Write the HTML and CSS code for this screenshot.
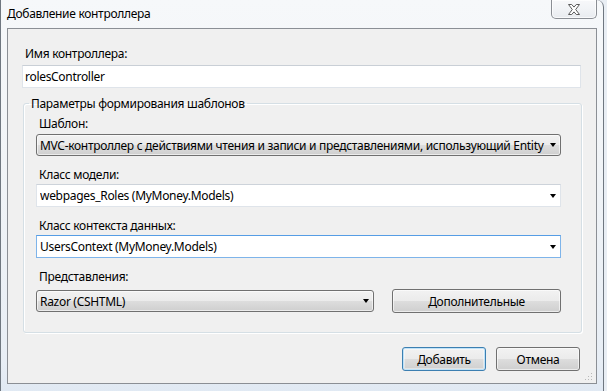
FILE: index.html
```html
<!DOCTYPE html>
<html lang="ru">
<head>
  <meta charset="UTF-8">
  <title>Добавление контроллера</title>
  <link rel="stylesheet" href="styles.css">
</head>
<body>

  <div class="window">
    <div class="titlebar">
      <span class="title">Добавление контроллера</span>
      <button class="close" title="Закрыть">
        <svg width="12" height="11" viewBox="0 0 12 11">
          <path d="M0.5 0.5h3.2l2.3 2.6 2.3-2.6h3.2l-3.8 5 3.8 5h-3.2l-2.3-2.6-2.3 2.6h-3.2l3.8-5z" fill="#fff" stroke="#5b5b5b" stroke-width="1" stroke-linejoin="round"/>
        </svg>
      </button>
    </div>

    <div class="client">
      <label class="label top-label">Имя контроллера:</label>
      <div class="textbox">rolesController</div>

      <fieldset class="group">
        <legend>Параметры формирования шаблонов</legend>

        <label class="label">Шаблон:</label>
        <div class="combo combo-list">
          <span class="combo-text">MVC-контроллер с действиями чтения и записи и представлениями, использующий Entity</span>
          <span class="arrow"></span>
        </div>

        <label class="label">Класс модели:</label>
        <div class="combo">
          <span class="combo-text">webpages_Roles (MyMoney.Models)</span>
          <span class="arrow"></span>
        </div>

        <label class="label">Класс контекста данных:</label>
        <div class="combo focused">
          <span class="combo-text">UsersContext (MyMoney.Models)</span>
          <span class="arrow"></span>
        </div>

        <label class="label">Представления:</label>
        <div class="views-row">
          <div class="combo combo-list">
            <span class="combo-text">Razor (CSHTML)</span>
            <span class="arrow"></span>
          </div>
          <button class="btn">Дополнительные</button>
        </div>
      </fieldset>

      <div class="actions">
        <button class="btn btn-default">Добавить</button>
        <button class="btn">Отмена</button>
      </div>

      <!-- size grip -->
      <svg class="grip" width="8" height="8" viewBox="0 0 8 8">
        <rect x="6" y="0" width="1" height="1" fill="#b8b8b8"/>
        <rect x="3" y="3" width="1" height="1" fill="#b8b8b8"/>
        <rect x="6" y="3" width="1" height="1" fill="#b8b8b8"/>
        <rect x="0" y="6" width="1" height="1" fill="#b8b8b8"/>
        <rect x="3" y="6" width="1" height="1" fill="#b8b8b8"/>
        <rect x="6" y="6" width="1" height="1" fill="#b8b8b8"/>
      </svg>
    </div>
  </div>

</body>
</html>
```

FILE: styles.css
```css
* {
  box-sizing: border-box;
}

body {
  margin: 0;
  width: 607px;
  height: 391px;
  overflow: hidden;
  background: #e9eef4;
  font-family: "Noto Sans", "Open Sans", sans-serif;
  font-size: 12px;
  letter-spacing: -0.3px;
  color: #000;
}

/* Window frame (Aero glass look) */
.window {
  width: 604px;
  height: 400px;
  padding: 0 6px;
  border: 1px solid #6f7780;
  border-top: none;
  border-radius: 0 7px 0 0;
  background: linear-gradient(180deg, #f6f8fa 0%, #f1f4f7 40%, #e8eef5 90%, #dfe8f3 100%);
  display: flex;
  flex-direction: column;
}

.titlebar {
  height: 28px;
  display: flex;
  justify-content: space-between;
  align-items: flex-start;
}

.title {
  padding-top: 6px;
  line-height: 16px;
}

.close {
  width: 46px;
  height: 19px;
  margin: 0;
  padding: 0;
  border: 1px solid #8a8e94;
  border-top: none;
  border-radius: 0 0 5px 5px;
  background: linear-gradient(180deg, #f7f8fa 0%, #f1f3f6 50%, #e8ebef 100%);
  box-shadow: inset 0 0 0 1px rgba(255, 255, 255, 0.7);
  display: flex;
  align-items: center;
  justify-content: center;
}

/* Client area */
.client {
  position: relative;
  height: 356px;
  padding: 17px 15px 12px 14px;
  border: 1px solid #8b8f95;
  background: #f0f0f0;
  display: flex;
  flex-direction: column;
}

.label {
  display: block;
  line-height: 15px;
  padding-left: 3px;
}

.top-label {
  margin-bottom: 4px;
}

.textbox {
  height: 23px;
  line-height: 21px;
  padding-left: 2px;
  background: #fff;
  border: 1px solid #dfe4ea;
  border-top-color: #c9cfd6;
}

/* Group box */
.group {
  margin: 8px -1px 0 1px;
  padding: 5px 20px 19px 12px;
  border: 1px solid #d5dfe5;
  border-radius: 3px;
  box-shadow: inset 1px 1px 0 #fff, 1px 1px 0 #fff;
  min-width: 0;
}

.group legend {
  margin-left: -7px;
  padding: 0 2px;
  line-height: 15px;
}

.group .label {
  margin-top: 11px;
  margin-bottom: 2px;
}

.group .label:first-of-type {
  margin-top: 0;
  margin-bottom: 3px;
}

/* Combo boxes */
.combo {
  height: 23px;
  display: flex;
  align-items: center;
  padding: 0 4px 0 3px;
  background: #fff;
  border: 1px solid #dfe4ea;
  border-top-color: #cdd3da;
}

.combo.focused {
  border-color: #7eb4ea;
  border-top-color: #569de5;
}

.combo-list {
  height: 22px;
  border: 1px solid #707070;
  border-radius: 3px;
  background: linear-gradient(180deg, #f2f2f2 0%, #ebebeb 50%, #dddddd 51%, #cfcfcf 100%);
  box-shadow: inset 0 0 0 1px rgba(255, 255, 255, 0.6);
}

.combo-text {
  flex: 1;
  white-space: nowrap;
  overflow: hidden;
}

.arrow {
  width: 0;
  height: 0;
  border-left: 3.5px solid transparent;
  border-right: 3.5px solid transparent;
  border-top: 4px solid #000;
  margin-left: 4px;
}

.group .label:nth-of-type(4) {
  margin-bottom: 5px;
}

.views-row {
  display: grid;
  grid-template-columns: 338px 1fr;
  gap: 18px;
  align-items: center;
}

/* Buttons */
.btn {
  height: 24px;
  padding: 0;
  font: inherit;
  letter-spacing: inherit;
  color: #000;
  border: 1px solid #707070;
  border-radius: 3px;
  background: linear-gradient(180deg, #f2f2f2 0%, #ebebeb 50%, #dddddd 51%, #cfcfcf 100%);
  box-shadow: inset 0 0 0 1px rgba(255, 255, 255, 0.6);
}

.btn-default {
  border-color: #3c7fb1;
  box-shadow: inset 0 0 0 1px #bfe2f8, inset 0 0 0 2px rgba(255, 255, 255, 0.4);
}

.actions {
  margin-top: auto;
  padding-right: 1px;
  display: flex;
  justify-content: flex-end;
  gap: 10px;
}

.actions .btn {
  width: 84px;
}

.grip {
  position: absolute;
  right: 3px;
  bottom: 2px;
}
```
